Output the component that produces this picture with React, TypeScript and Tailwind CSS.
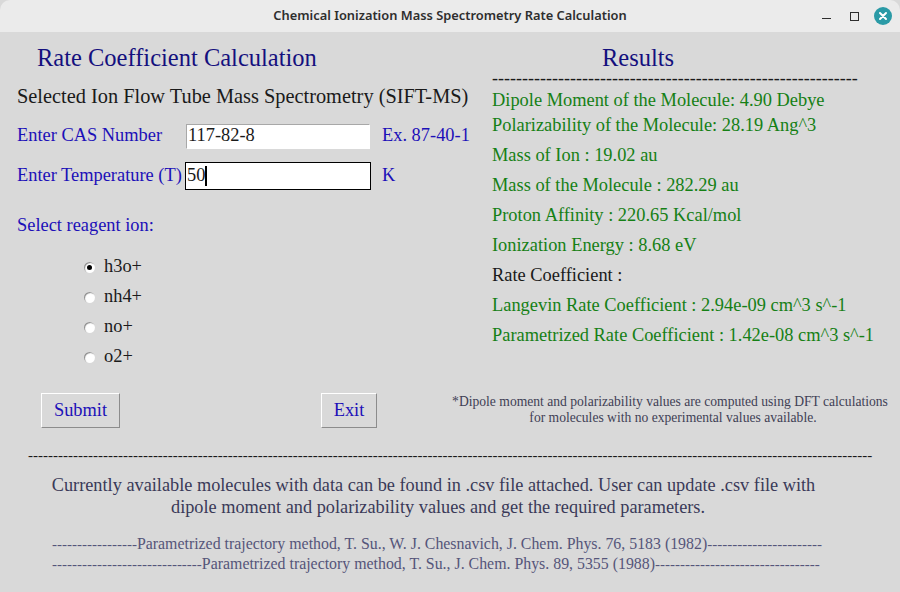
const blue = 'text-[#1c10b8]';

function Radio({ label, checked }: { label: string; checked?: boolean }) {
  return (
    <div className="flex h-[30px] items-center">
      <span className="flex h-[11px] w-[11px] items-center justify-center rounded-full bg-white shadow-[inset_1px_1px_1px_#8a8a8a]">
        {checked && <span className="h-[5px] w-[5px] rounded-full bg-black" />}
      </span>
      <span className="ml-[9px] text-[18.4px] text-[#1a1a1a]">{label}</span>
    </div>
  );
}

function Button({ label, width }: { label: string; width: string }) {
  return (
    <button
      className={`h-[35px] border border-t-white border-l-white border-r-[#8c8c8c] border-b-[#8c8c8c] bg-[#d9d9d9] pt-[1px] text-[18.4px] text-[#1c10b8] ${width}`}
    >
      {label}
    </button>
  );
}

function Result({ text, h = 'h-[30px]', color = 'text-[#158015]' }: { text: string; h?: string; color?: string }) {
  return <div className={`flex items-center whitespace-nowrap text-[18.4px] ${h} ${color}`}>{text}</div>;
}

function Citation({ before, text, after }: { before: number; text: string; after: number }) {
  return (
    <div className="flex h-[20px] items-center">
      <span className="text-[15px]">{'-'.repeat(before)}</span>
      <span className="text-[15.87px]">{text}</span>
      <span className="text-[15px]">{'-'.repeat(after)}</span>
    </div>
  );
}

export default function App() {
  return (
    <div className="flex h-[592px] w-[900px] flex-col overflow-hidden bg-[#d9d9d9] font-['Liberation_Serif',serif]">
      <div className="relative flex h-[32px] shrink-0 items-center justify-center rounded-t-[10px] bg-[#ebebeb]">
        <span className="font-['Noto_Sans',sans-serif] text-[12.85px] font-semibold text-[#2e2e2e]">
          Chemical Ionization Mass Spectrometry Rate Calculation
        </span>
        <div className="absolute right-[8px] top-[7px] flex items-center">
          <svg width="9" height="10" viewBox="0 0 9 10" className="mr-[19px]">
            <rect x="0" y="7" width="9" height="1" fill="#2e2e2e" />
          </svg>
          <span className="mr-[15px] h-[9px] w-[9px] border border-[#2e2e2e]" />
          <span className="flex h-[18px] w-[18px] items-center justify-center rounded-full bg-[#2a9aa6]">
            <svg width="10" height="10" viewBox="0 0 10 10">
              <path d="M2 2 L8 8 M8 2 L2 8" stroke="#fff" strokeWidth="2" strokeLinecap="round" />
            </svg>
          </span>
        </div>
      </div>

      <div className="flex h-[355px] shrink-0">
        <div className="w-[492px] shrink-0 pl-[17px]">
          <h1 className="ml-[20px] mt-[12px] text-[24.5px] leading-[28px] text-[#14107e]">Rate Coefficient Calculation</h1>
          <p className="mt-[12px] whitespace-nowrap text-[20.35px] leading-[24px] text-[#1a1a1a]">
            Selected Ion Flow Tube Mass Spectrometry (SIFT-MS)
          </p>
          <div className={`mt-[8px] flex h-[40px] items-center text-[18.4px] ${blue}`}>
            <span className="w-[169px]">Enter CAS Number</span>
            <div className="flex h-[25px] w-[184px] items-center border border-[#a8a8a8] border-r-white border-b-white bg-white pl-[1px] text-[18.4px] text-[#1a1a1a]">
              117-82-8
            </div>
            <span className="ml-[12px]">Ex. 87-40-1</span>
          </div>
          <div className={`flex h-[40px] items-center text-[18.4px] ${blue}`}>
            <span className="w-[168px] whitespace-nowrap">Enter Temperature (T)</span>
            <div className="flex h-[28px] w-[186px] items-center border-[1.5px] border-black bg-white pl-[1px] text-[18.4px] text-[#1a1a1a]">
              50
              <span className="h-[20px] w-[1.5px] bg-black" />
            </div>
            <span className="ml-[11px]">K</span>
          </div>
          <p className={`mt-[19px] text-[18.4px] leading-[20px] ${blue}`}>Select reagent ion:</p>
          <div className="ml-[67px] mt-[17px]">
            <Radio label="h3o+" checked />
            <Radio label="nh4+" />
            <Radio label="no+" />
            <Radio label="o2+" />
          </div>
        </div>

        <div className="flex-1">
          <h2 className="ml-[110px] mt-[12px] text-[24.5px] leading-[28px] text-[#14107e]">Results</h2>
          <div className="mt-[-1px] h-[14px] whitespace-nowrap text-[18px] leading-[14px] text-[#1a1a1a]">
            -------------------------------------------------------------
          </div>
          <Result text="Dipole Moment of the Molecule: 4.90 Debye" h="h-[25px] mt-[3px]" />
          <Result text="Polarizability of the Molecule: 28.19 Ang^3" h="h-[25px]" />
          <Result text="Mass of Ion : 19.02 au" h="h-[30px] mt-[3px]" />
          <Result text="Mass of the Molecule : 282.29 au" />
          <Result text="Proton Affinity : 220.65 Kcal/mol" />
          <Result text="Ionization Energy : 8.68 eV" />
          <Result text="Rate Coefficient :" color="text-[#1a1a1a]" />
          <Result text="Langevin Rate Coefficient : 2.94e-09 cm^3 s^-1" />
          <Result text="Parametrized Rate Coefficient : 1.42e-08 cm^3 s^-1" />
        </div>
      </div>

      <div className="flex h-[46px] shrink-0 items-center">
        <div className="ml-[41px] w-[280px]">
          <Button label="Submit" width="w-[79px]" />
        </div>
        <Button label="Exit" width="w-[56px]" />
        <div className="ml-[74px] w-[438px] shrink-0 text-center text-[13.6px] leading-[16px] text-[#3f3f55]">
          <div>*Dipole moment and polarizability values are computed using DFT calculations</div>
          <div className="pl-[6px]">for molecules with no experimental values available.</div>
        </div>
      </div>

      <div className="mt-[14px] overflow-hidden whitespace-nowrap pl-[28px] text-[15px] font-medium leading-[16px] text-[#1a1a1a]">
        {'-'.repeat(169)}
      </div>
      <div className="mt-[11px] text-center text-[18.3px] leading-[22px] text-[#3a3a58]">
        <div className="pr-[33px]">Currently available molecules with data can be found in .csv file attached. User can update .csv file with</div>
        <div className="pr-[24px]">dipole moment and polarizability values and get the required parameters.</div>
      </div>
      <div className="mt-[16px] whitespace-nowrap pl-[52px] text-[#55557a]">
        <Citation before={17} text="Parametrized trajectory method, T. Su., W. J. Chesnavich, J. Chem. Phys. 76, 5183 (1982)" after={23} />
        <Citation before={30} text="Parametrized trajectory method, T. Su., J. Chem. Phys. 89, 5355 (1988)" after={33} />
      </div>
    </div>
  );
}
